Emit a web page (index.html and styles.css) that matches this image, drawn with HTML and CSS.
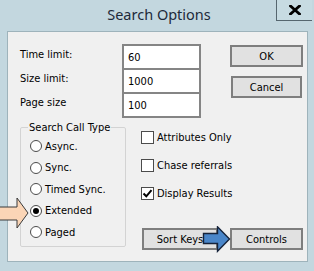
FILE: index.html
```html
<!DOCTYPE html>
<html>
<head>
<meta charset="utf-8">
<link rel="stylesheet" href="styles.css">
</head>
<body>
<div class="window">
  <div class="titlebar">
    <div class="title">Search Options</div>
    <div class="close">
      <svg width="12" height="10" viewBox="0 0 12 10"><path d="M1.5 1 L10.5 9 M10.5 1 L1.5 9" stroke="#000" stroke-width="2.8" stroke-linecap="square"/></svg>
    </div>
  </div>
  <div class="content">
    <div class="top">
      <div class="fields">
        <div class="label">Time limit:</div><div class="input">60</div>
        <div class="label">Size limit:</div><div class="input">1000</div>
        <div class="label">Page size</div><div class="input last">100</div>
      </div>
      <div class="actions">
        <div class="btn">OK</div>
        <div class="btn cancel">Cancel</div>
      </div>
    </div>
    <div class="lower">
      <fieldset class="group">
        <legend>Search Call Type</legend>
        <div class="radio"><span class="dot"></span>Async.</div>
        <div class="radio"><span class="dot"></span>Sync.</div>
        <div class="radio"><span class="dot"></span>Timed Sync.</div>
        <div class="radio"><span class="dot on"></span>Extended</div>
        <div class="radio"><span class="dot"></span>Paged</div>
      </fieldset>
      <div class="right">
        <div class="check"><span class="box"></span>Attributes Only</div>
        <div class="check"><span class="box"></span>Chase referrals</div>
        <div class="check"><span class="box"><svg width="11" height="11" viewBox="0 0 11 11"><path d="M1.5 5.5 L4.3 8.3 L9.5 2.2" fill="none" stroke="#000" stroke-width="2"/></svg></span>Display Results</div>
        <div class="buttons">
          <div class="btn sort">Sort Keys</div>
          <div class="btn">Controls</div>
        </div>
      </div>
    </div>
  </div>
  <svg class="arrow-peach" width="30" height="34" viewBox="0 0 30 34"><path d="M-2 10 L17 10 L17 1 L28 16 L17 31 L17 23 L-2 23 Z" fill="#fbd5b6" stroke="#3a3a3a" stroke-width="1"/></svg>
  <svg class="arrow-blue" width="30" height="28" viewBox="0 0 30 28"><path d="M1.5 7.5 L15.5 7.5 L15.5 0.8 L27.5 13 L15.5 25.2 L15.5 17.5 L1.5 17.5 Z" fill="#4a86c9" stroke="#16233a" stroke-width="1.4"/></svg>
</div>
</body>
</html>
```
FILE: styles.css
```css
* { box-sizing: border-box; }
body { margin: 0; background: #ffffff; }
.window {
  position: relative;
  width: 314px;
  height: 271px;
  background: #c3d7df;
  display: flex;
  flex-direction: column;
  overflow: hidden;
  font-family: "DejaVu Sans Condensed", "DejaVu Sans", sans-serif;
  font-stretch: condensed;
  font-size: 11px;
  color: #000;
}
.titlebar {
  flex-shrink: 0;
  height: 31px;
  display: grid;
  grid-template-columns: 38px 1fr 38px;
}
.title {
  grid-column: 2;
  text-align: center;
  padding-left: 4px;
  padding-top: 4px;
  font-family: "Noto Sans", "Open Sans", sans-serif;
  font-stretch: normal;
  font-size: 14.5px;
  color: #1d2a3a;
}
.close {
  grid-column: 3;
  width: 36px;
  height: 21px;
  border-left: 1px solid #56666f;
  border-bottom: 1px solid #56666f;
  display: flex;
  align-items: center;
  justify-content: center;
  background: #c7dbe2;
}
.content {
  height: 231px;
  flex-shrink: 0;
  margin: 0 6px 0 7px;
  background: #f0f0f0;
  border: 1px solid #9eb3bb;
  padding: 12px 0 0 12px;
  display: flex;
  flex-direction: column;
}
.top { display: flex; }
.fields {
  display: grid;
  grid-template-columns: 102px 79px;
  grid-auto-rows: 24px;
}
.label {
  display: flex;
  align-items: center;
  padding-bottom: 3px;
}
.input {
  background: #fff;
  border: 2px solid #858585;
  border-bottom: none;
  padding-left: 4px;
  display: flex;
  align-items: center;
}
.input.last { border-bottom: 2px solid #858585; height: 26px; }
.actions {
  margin-left: 29px;
  margin-top: 1px;
  display: flex;
  flex-direction: column;
  gap: 9px;
}
.btn {
  width: 73px;
  height: 22px;
  background: #e1e1e1;
  border: 2px solid #7e7e7e;
  display: flex;
  align-items: center;
  justify-content: center;
}
.cancel { margin-left: 1px; width: 71px; }
.lower {
  margin-top: 5px;
  display: grid;
  grid-template-columns: 106px 1fr;
  grid-template-rows: 129px;
  column-gap: 15px;
}
.group {
  margin: 0;
  align-self: start;
  border: 1px solid #d3d3d3;
  border-radius: 2px;
  padding: 1.5px 0 3px 9px;
}
.group legend {
  padding: 0 1px;
  margin-left: -2px;
  line-height: 13px;
}
.radio {
  height: 21.5px;
  display: flex;
  align-items: center;
}
.dot {
  width: 12px;
  height: 12px;
  border-radius: 50%;
  border: 1px solid #4b4b4b;
  background: #fff;
  margin-right: 3px;
  display: flex;
  align-items: center;
  justify-content: center;
}
.dot.on::after {
  content: "";
  width: 6px;
  height: 6px;
  border-radius: 50%;
  background: #000;
}
.right {
  display: flex;
  flex-direction: column;
  padding-top: 8px;
  gap: 12px;
}
.check {
  height: 16px;
  display: flex;
  align-items: center;
}
.box {
  width: 13px;
  height: 13px;
  border: 1px solid #4b4b4b;
  background: #fff;
  margin-right: 3px;
  display: flex;
  align-items: center;
  justify-content: center;
}
.buttons {
  margin-top: auto;
  display: flex;
  gap: 12px;
  padding-left: 1px;
}
.sort { width: 76px; }
.arrow-peach { position: absolute; left: 0; top: 197px; }
.arrow-blue { position: absolute; left: 202px; top: 226px; }
```
